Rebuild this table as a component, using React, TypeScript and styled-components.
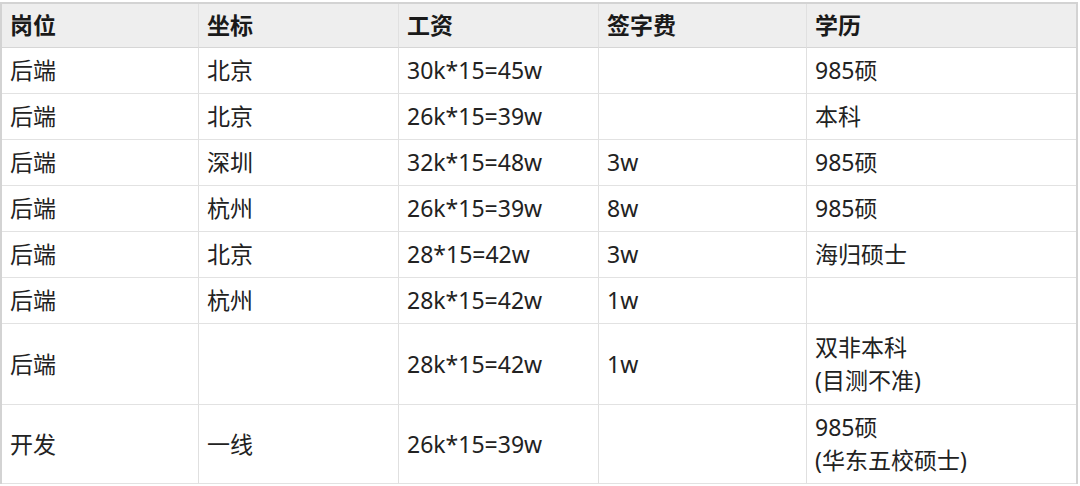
import styled, { createGlobalStyle } from "styled-components";

const GlobalStyle = createGlobalStyle`
  html, body {
    margin: 0;
    padding: 0;
    background: #ffffff;
  }
  body {
    font-family: "Noto Sans", "Noto Sans CJK SC", sans-serif;
    color: #222222;
  }
`;

const Page = styled.div`
  padding-top: 2px;
  width: 1080px;
  height: 486px;
  overflow: hidden;
  box-sizing: border-box;
`;

const Table = styled.div`
  display: grid;
  grid-template-columns: 197px 200px 200px 208px 269px;
  grid-template-rows: 44px repeat(6, 46px) 81px 79px;
  width: 1078px;
  box-sizing: border-box;
  border-top: 2px solid #d3d3d3;
  border-left: 2px solid #d3d3d3;
  border-right: 2px solid #d3d3d3;
`;

const Cell = styled.div<{ $head?: boolean; $last?: boolean }>`
  display: flex;
  flex-direction: column;
  justify-content: center;
  box-sizing: border-box;
  padding: 0 8px;
  font-size: 23px;
  line-height: 33px;
  white-space: nowrap;
  border-bottom: 1px solid ${(p) => (p.$head ? "#d6d6d6" : "#e2e2e2")};
  border-right: ${(p) => (p.$last ? "none" : "1px solid #e0e0e0")};
  background: ${(p) => (p.$head ? "#eeeeee" : "#ffffff")};
  font-weight: ${(p) => (p.$head ? 700 : 400)};
  color: ${(p) => (p.$head ? "#1a1a1a" : "#222222")};
`;

const headers = ["岗位", "坐标", "工资", "签字费", "学历"];

const rows: string[][][] = [
  [["后端"], ["北京"], ["30k*15=45w"], [], ["985硕"]],
  [["后端"], ["北京"], ["26k*15=39w"], [], ["本科"]],
  [["后端"], ["深圳"], ["32k*15=48w"], ["3w"], ["985硕"]],
  [["后端"], ["杭州"], ["26k*15=39w"], ["8w"], ["985硕"]],
  [["后端"], ["北京"], ["28*15=42w"], ["3w"], ["海归硕士"]],
  [["后端"], ["杭州"], ["28k*15=42w"], ["1w"], []],
  [["后端"], [], ["28k*15=42w"], ["1w"], ["双非本科", "(目测不准)"]],
  [["开发"], ["一线"], ["26k*15=39w"], [], ["985硕", "(华东五校硕士)"]],
];

export default function App() {
  return (
    <Page>
      <GlobalStyle />
      <Table>
        {headers.map((h, i) => (
          <Cell key={h} $head $last={i === headers.length - 1}>
            {h}
          </Cell>
        ))}
        {rows.map((row, r) =>
          row.map((lines, c) => (
            <Cell key={`${r}-${c}`} $last={c === row.length - 1}>
              {lines.map((t) => (
                <span key={t}>{t}</span>
              ))}
            </Cell>
          ))
        )}
      </Table>
    </Page>
  );
}
